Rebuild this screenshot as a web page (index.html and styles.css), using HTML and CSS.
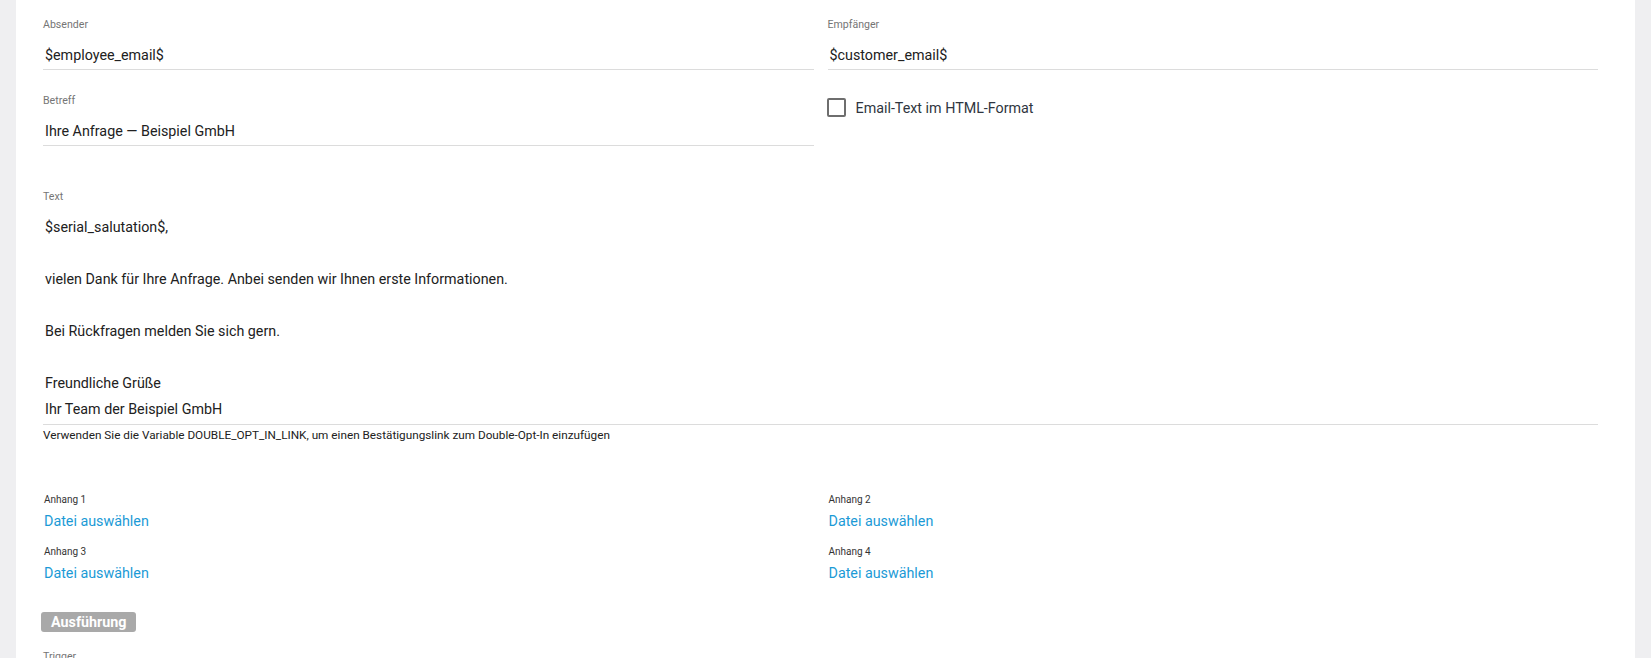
FILE: index.html
```html
<!DOCTYPE html>
<html lang="de">
<head>
<meta charset="utf-8">
<link rel="stylesheet" href="styles.css">
</head>
<body>
<div class="panel">
  <div class="grid">
    <div class="field">
      <div class="label">Absender</div>
      <div class="value">$employee_email$</div>
    </div>
    <div class="field">
      <div class="label">Empfänger</div>
      <div class="value">$customer_email$</div>
    </div>
    <div class="field">
      <div class="label">Betreff</div>
      <div class="value">Ihre Anfrage — Beispiel GmbH</div>
    </div>
    <div class="check-row">
      <span class="checkbox"></span>
      <span class="check-label">Email-Text im HTML-Format</span>
    </div>
  </div>

  <div class="field text-field">
    <div class="label">Text</div>
    <div class="textarea">
      <div class="line">$serial_salutation$,</div>
      <div class="line"></div>
      <div class="line">vielen Dank für Ihre Anfrage. Anbei senden wir Ihnen erste Informationen.</div>
      <div class="line"></div>
      <div class="line">Bei Rückfragen melden Sie sich gern.</div>
      <div class="line"></div>
      <div class="line">Freundliche Grüße</div>
      <div class="line">Ihr Team der Beispiel GmbH</div>
    </div>
  </div>
  <div class="hint">Verwenden Sie die Variable DOUBLE_OPT_IN_LINK, um einen Bestätigungslink zum Double-Opt-In einzufügen</div>

  <div class="grid attachments">
    <div class="attach">
      <div class="attach-label">Anhang 1</div>
      <a class="file-link">Datei auswählen</a>
    </div>
    <div class="attach">
      <div class="attach-label">Anhang 2</div>
      <a class="file-link">Datei auswählen</a>
    </div>
    <div class="attach">
      <div class="attach-label">Anhang 3</div>
      <a class="file-link">Datei auswählen</a>
    </div>
    <div class="attach">
      <div class="attach-label">Anhang 4</div>
      <a class="file-link">Datei auswählen</a>
    </div>
  </div>

  <div class="section-badge">Ausführung</div>
  <div class="label trigger">Trigger</div>
</div>
</body>
</html>
```
FILE: styles.css
```css
html, body {
  margin: 0;
  padding: 0;
  background: #efeff1;
  font-family: Roboto, "Liberation Sans", Arial, sans-serif;
  color: #212121;
}

.panel {
  margin: 0 16px;
  background: #ffffff;
  padding: 18px 37px 0 27px;
  height: 640px;
  overflow: hidden;
}

.grid {
  display: grid;
  grid-template-columns: 1fr 1fr;
  column-gap: 14px;
}

.field {
  margin-bottom: 24px;
}

.label {
  font-size: 10.6px;
  line-height: 14px;
  color: #757575;
  margin-bottom: 13px;
}

.value {
  font-size: 14.3px;
  line-height: 20px;
  padding: 0 2px 4px;
  border-bottom: 1px solid #dcdcdc;
}

.check-row {
  display: flex;
  align-items: center;
  margin-top: 4px;
  height: 19px;
}

.checkbox {
  width: 15px;
  height: 15px;
  border: 2px solid #6e6e6e;
  border-radius: 2px;
  margin-left: -1px;
  flex: none;
}

.check-label {
  margin-left: 10px;
  font-size: 14.3px;
  color: #2f3640;
}

.text-field {
  margin-top: 20px;
  margin-bottom: 0;
}

.text-field .label {
  margin-bottom: 10px;
}

.textarea {
  font-size: 14.3px;
  line-height: 26px;
  padding: 0 2px 2px;
  border-bottom: 1px solid #dcdcdc;
}

.line {
  height: 26px;
}

.hint {
  font-size: 11.75px;
  line-height: 14px;
  margin-top: 3px;
  color: #212121;
}

.attachments {
  margin-top: 51px;
  row-gap: 14px;
}

.attach {
  display: flex;
  flex-direction: column;
  align-items: flex-start;
  padding-left: 1px;
}

.attach-label {
  font-size: 10px;
  line-height: 14px;
  color: #333333;
  margin-bottom: 4px;
}

.file-link {
  font-size: 14.3px;
  line-height: 20px;
  color: #1b9ad6;
  cursor: pointer;
}

.section-badge {
  display: inline-block;
  margin-top: 29px;
  margin-left: -2px;
  background: #a9a9a9;
  color: #ffffff;
  font-weight: 700;
  font-size: 14.3px;
  line-height: 20px;
  padding: 0 10px;
  border-radius: 3px;
}

.trigger {
  margin-top: 18px;
}
```
